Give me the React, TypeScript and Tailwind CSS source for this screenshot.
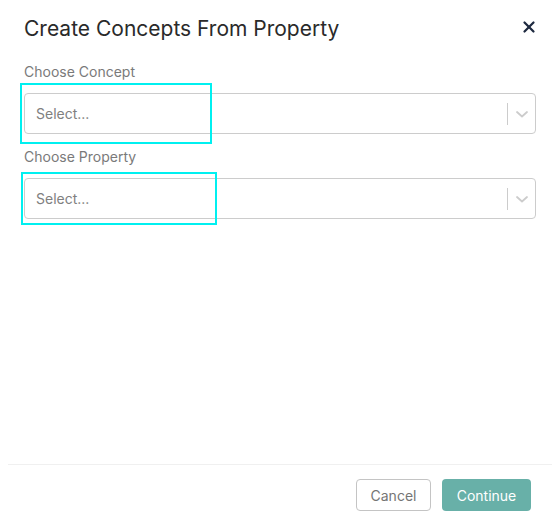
import { X } from 'lucide-react';

function SelectBox() {
  return (
    <div className="flex h-[41px] items-center rounded border border-[#cccccc] bg-white">
      <span className="flex-1 pl-[11px] text-[14px] text-[#808080]">Select...</span>
      <span className="h-[22px] w-px bg-[#cccccc]" />
      <span className="flex w-[27px] justify-center text-[#cccccc]">
        <svg width="14" height="14" viewBox="0 0 14 14" fill="none" stroke="currentColor" strokeWidth="1.8" strokeLinecap="round" strokeLinejoin="round">
          <path d="M2 5l5 4.5L12 5" />
        </svg>
      </span>
    </div>
  );
}

export default function App() {
  return (
    <div className="relative flex h-[525px] w-[552px] flex-col bg-white font-['Inter',sans-serif]">
      <div className="flex items-start justify-between pl-6 pr-[14px] pt-[15px]">
        <h2 className="text-[21px] leading-[28px] text-[#2a2a2a]">Create Concepts From Property</h2>
        <X className="mt-[3px] h-[18px] w-[18px] text-[#1e2a40]" strokeWidth={3} />
      </div>

      <div className="flex flex-col pl-6 pr-4 pt-[19px]">
        <label className="text-[14px] leading-[20px] text-[#7a7a7a]">Choose Concept</label>
        <div className="mt-[11px]">
          <SelectBox />
        </div>
        <label className="mt-[13px] text-[14px] leading-[20px] text-[#7a7a7a]">Choose Property</label>
        <div className="mt-[11px]">
          <SelectBox />
        </div>
      </div>

      <div className="flex-1" />

      <div className="ml-2 flex justify-end gap-[11px] border-t border-[#f0f0f0] pb-[14px] pr-[21px] pt-[14px]">
        <button className="h-8 w-[75px] rounded border border-[#c4c4c4] bg-white text-[14px] text-[#757575]">Cancel</button>
        <button className="h-8 w-[89px] rounded bg-[#68b0a8] text-[14px] text-white">Continue</button>
      </div>

      <div className="absolute left-[20px] top-[83px] h-[61px] w-[192px] border-2 border-[#00f0f0]" />
      <div className="absolute left-[21px] top-[172px] h-[53px] w-[196px] border-2 border-[#00f0f0]" />
    </div>
  );
}
